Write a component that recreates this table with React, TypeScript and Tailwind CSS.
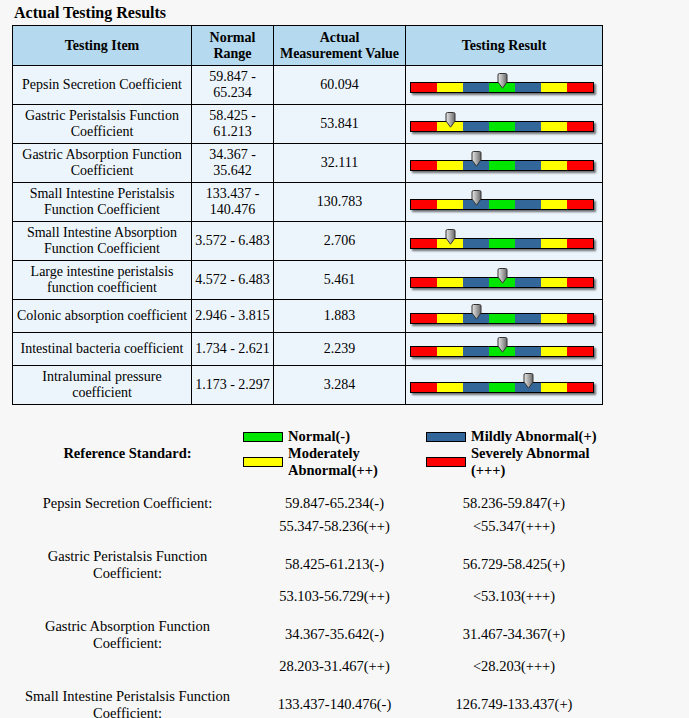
import React from "react";

type Row = { item: string; range: string; value: string; level: number };

const rows: Row[] = [
  { item: "Pepsin Secretion Coefficient", range: "59.847 - 65.234", value: "60.094", level: 3 },
  { item: "Gastric Peristalsis Function Coefficient", range: "58.425 - 61.213", value: "53.841", level: 1 },
  { item: "Gastric Absorption Function Coefficient", range: "34.367 - 35.642", value: "32.111", level: 2 },
  { item: "Small Intestine Peristalsis Function Coefficient", range: "133.437 - 140.476", value: "130.783", level: 2 },
  { item: "Small Intestine Absorption Function Coefficient", range: "3.572 - 6.483", value: "2.706", level: 1 },
  { item: "Large intestine peristalsis function coefficient", range: "4.572 - 6.483", value: "5.461", level: 3 },
  { item: "Colonic absorption coefficient", range: "2.946 - 3.815", value: "1.883", level: 2 },
  { item: "Intestinal bacteria coefficient", range: "1.734 - 2.621", value: "2.239", level: 3 },
  { item: "Intraluminal pressure coefficient", range: "1.173 - 2.297", value: "3.284", level: 4 },
];

const standards = [
  {
    label: "Pepsin Secretion Coefficient:",
    values: ["59.847-65.234(-)", "58.236-59.847(+)", "55.347-58.236(++)", "<55.347(+++)"],
  },
  {
    label: "Gastric Peristalsis Function Coefficient:",
    values: ["58.425-61.213(-)", "56.729-58.425(+)", "53.103-56.729(++)", "<53.103(+++)"],
  },
  {
    label: "Gastric Absorption Function Coefficient:",
    values: ["34.367-35.642(-)", "31.467-34.367(+)", "28.203-31.467(++)", "<28.203(+++)"],
  },
  {
    label: "Small Intestine Peristalsis Function Coefficient:",
    values: ["133.437-140.476(-)", "126.749-133.437(+)"],
  },
];

const segments = ["bg-[#ff0000]", "bg-[#ffff00]", "bg-[#336699]", "bg-[#00e600]", "bg-[#336699]", "bg-[#ffff00]", "bg-[#ff0000]"];

function Marker() {
  return (
    <svg width="11" height="16" viewBox="0 0 11 16">
      <defs>
        <linearGradient id="mk" x1="0" x2="1" y1="0" y2="0">
          <stop offset="0" stopColor="#e8e8e8" />
          <stop offset="0.45" stopColor="#b0b0b0" />
          <stop offset="1" stopColor="#666" />
        </linearGradient>
      </defs>
      <path d="M1 2 Q1 0.5 2.5 0.5 H8.5 Q10 0.5 10 2 V9 L5.5 15.2 L1 9 Z" fill="url(#mk)" stroke="#333" strokeWidth="1" />
    </svg>
  );
}

function ResultBar({ level }: { level: number }) {
  // marker centred on the segment for this level
  const left = 14 + 26 * level - 5.5;
  return (
    <div className="relative w-[188px] h-[26px]">
      <div className="absolute left-0 top-[10px] flex border border-black shadow-[2px_2px_2px_rgba(0,0,0,0.55)]">
        {segments.map((c, i) => (
          <div key={i} className={`w-[26px] h-[9px] ${c}`} />
        ))}
      </div>
      <div className="absolute top-[1px]" style={{ left }}>
        <Marker />
      </div>
    </div>
  );
}

function LegendItem({ color, label }: { color: string; label: string }) {
  return (
    <div className="flex items-center gap-[5px]">
      <div className={`w-[40px] h-[10px] border border-black shrink-0 ${color}`} />
      <span>{label}</span>
    </div>
  );
}

export default function App() {
  return (
    <div className="min-h-screen bg-[#f7f7f7] text-black font-['Liberation_Serif','Times_New_Roman',serif]">
      <h2 className="pl-[14px] pt-[4px] mb-[3px] text-[16px] leading-[18px] font-bold">Actual Testing Results</h2>

      <table className="ml-[12px] w-[590px] table-fixed border-collapse border border-black text-[14px] leading-[16px]">
        <colgroup>
          <col className="w-[179px]" />
          <col className="w-[82px]" />
          <col className="w-[132px]" />
          <col className="w-[197px]" />
        </colgroup>
        <thead>
          <tr className="bg-[#b5d9ee] h-[40px]">
            <th className="border border-black px-[2px] font-bold">Testing Item</th>
            <th className="border border-black px-[2px] font-bold">
              Normal
              <br />
              Range
            </th>
            <th className="border border-black px-[2px] font-bold">
              Actual
              <br />
              Measurement Value
            </th>
            <th className="border border-black px-[2px] font-bold">Testing Result</th>
          </tr>
        </thead>
        <tbody>
          {rows.map((r) => (
            <tr key={r.item} className="bg-[#edf5fc]">
              <td className="border border-black px-[3px] py-[3px] text-center">{r.item}</td>
              <td className="border border-black px-[2px] py-[3px] text-center">{r.range}</td>
              <td className="border border-black px-[2px] py-[3px] text-center">{r.value}</td>
              <td className="border border-black pl-[4px] py-[3px]">
                <ResultBar level={r.level} />
              </td>
            </tr>
          ))}
        </tbody>
      </table>

      <div className="mt-[23px] ml-[12px] grid grid-cols-[231px_183px_176px] text-[14.5px] leading-[17px] font-bold">
        <div className="row-span-2 flex items-center justify-center">Reference Standard:</div>
        <LegendItem color="bg-[#00e600]" label="Normal(-)" />
        <LegendItem color="bg-[#336699]" label="Mildly Abnormal(+)" />
        <LegendItem color="bg-[#ffff00]" label="Moderately Abnormal(++)" />
        <LegendItem color="bg-[#ff0000]" label="Severely Abnormal (+++)" />
      </div>

      <div className="mt-[12px] ml-[12px] flex flex-col gap-[6px] text-[14.5px] leading-[17px]">
        {standards.map((s) => (
          <div key={s.label} className="grid grid-cols-[231px_183px_176px]">
            <div className="px-[4px] py-[3.5px] text-center">{s.label}</div>
            <div className="flex items-center justify-center">{s.values[0]}</div>
            <div className="flex items-center justify-center">{s.values[1]}</div>
            {s.values.length > 2 && (
              <>
                <div className="py-[3px]" />
                <div className="py-[3px] text-center">{s.values[2]}</div>
                <div className="py-[3px] text-center">{s.values[3]}</div>
              </>
            )}
          </div>
        ))}
      </div>
    </div>
  );
}
